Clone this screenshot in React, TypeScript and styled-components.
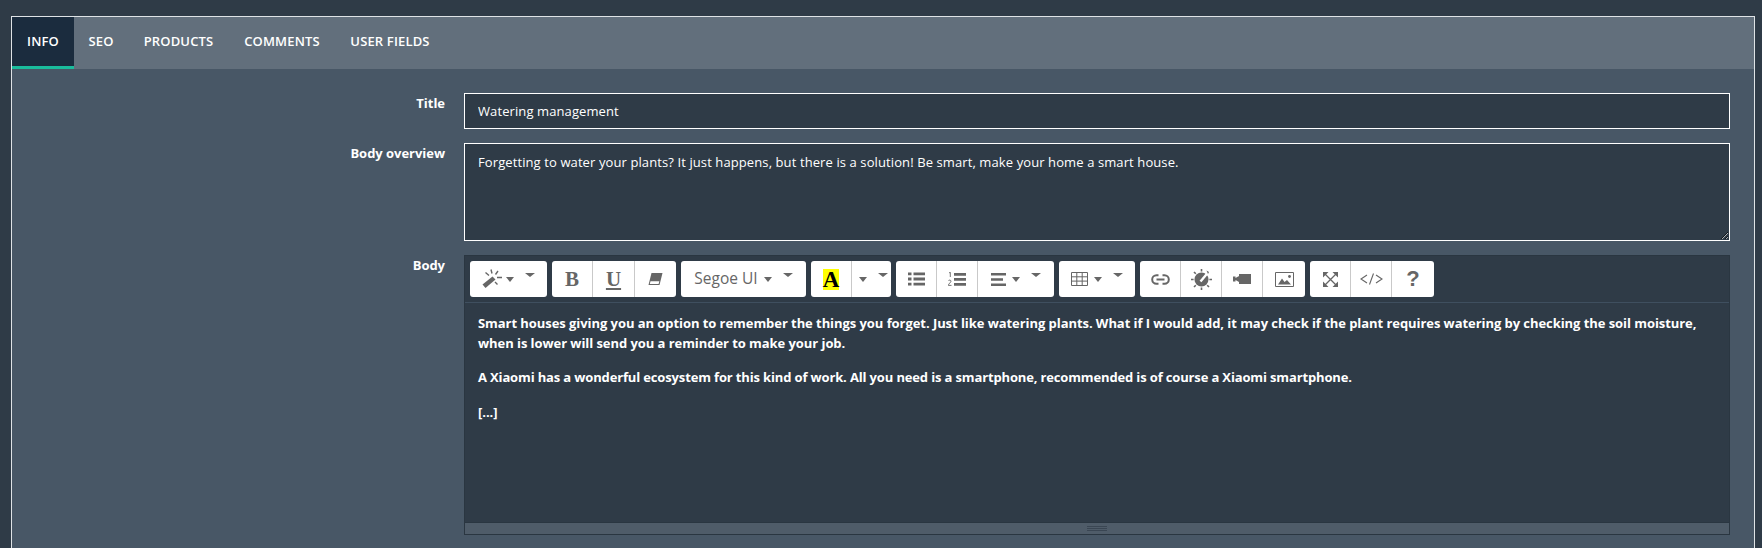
import React from "react";
import styled, { createGlobalStyle } from "styled-components";

const Global = createGlobalStyle`
  html, body { margin: 0; padding: 0; height: 100%; overflow: hidden; background: #2f3b47; }
  body { font-family: "Open Sans", "Noto Sans", "Liberation Sans", sans-serif; font-size: 13px; color: #fff; }
`;

const Page = styled.div`
  height: 548px;
  padding: 16px 7px 0 11px;
  box-sizing: border-box;
  overflow: hidden;
  background: #2f3b47;
`;
const Panel = styled.section`
  border: 1px solid #dfe3e6;
  border-bottom: 0;
  background: #485766;
  height: 600px;
`;
const Tabs = styled.nav`
  display: flex;
  height: 52px;
  background: #626f7c;
`;
const Tab = styled.a<{ $active?: boolean; $w: number }>`
  width: ${p => p.$w}px;
  box-sizing: border-box;
  display: flex;
  align-items: center;
  justify-content: center;
  padding-bottom: 2px;
  font-size: 13px;
  font-weight: 600;
  letter-spacing: 0.15px;
  color: #fff;
  background: ${p => (p.$active ? "#1b2c3e" : "transparent")};
  border-bottom: 3px solid ${p => (p.$active ? "#1abc9c" : "transparent")};
`;
const Form = styled.div`
  padding: 24px 24px 0 0;
  display: flex;
  flex-direction: column;
  gap: 14px;
`;
const Row = styled.div`
  display: grid;
  grid-template-columns: 433px 1fr;
  column-gap: 19px;
`;
const Label = styled.label`
  text-align: right;
  font-weight: 700;
  font-size: 13px;
  letter-spacing: -0.03px;
  line-height: 18px;
  padding-top: 1px;
`;
const TextInput = styled.input`
  box-sizing: border-box;
  display: block;
  width: 100%;
  height: 36px;
  padding: 0 13px;
  border: 1px solid #fff;
  border-radius: 0;
  background: #2f3b47;
  color: #fff;
  font: 400 13px "Open Sans", sans-serif;
  letter-spacing: 0.1px;
  outline: none;
`;
const TextArea = styled.textarea`
  box-sizing: border-box;
  display: block;
  width: 100%;
  height: 98px;
  padding: 9px 13px;
  border: 1px solid #fff;
  border-radius: 0;
  background: #2f3b47;
  color: #fff;
  font: 400 13px/19px "Open Sans", sans-serif;
  letter-spacing: 0.1px;
  outline: none;
  color-scheme: dark;
`;
const Editor = styled.div`
  border: 1px solid #2a3641;
  background: #2f3b47;
`;
const Toolbar = styled.div`
  display: flex;
  gap: 5px;
  padding: 5px 0 5px 5px;
  border-bottom: 1px solid #3f4f5f;
`;
const Group = styled.div`
  display: flex;
  height: 36px;
  background: #fff;
  border-radius: 3px;
  color: #666;
`;
const Btn = styled.div<{ $w: number; $gap?: number; $pl?: number }>`
  width: ${p => p.$w}px;
  box-sizing: border-box;
  display: flex;
  align-items: center;
  justify-content: center;
  gap: ${p => p.$gap ?? 6}px;
  padding-left: ${p => p.$pl ?? 0}px;
  &:not(:last-child) { border-right: 1px solid #c9c9c9; }
`;
const Serif = styled.span<{ $u?: boolean }>`
  font: 700 21px "Liberation Serif", serif;
  color: #666;
  text-decoration: ${p => (p.$u ? "underline" : "none")};
`;
const FontName = styled.span`
  font-size: 15.5px;
  color: #666;
  padding-bottom: 2px;
`;
const Highlight = styled.span`
  display: flex;
  align-items: center;
  justify-content: center;
  width: 16px;
  height: 21px;
  background: #ff0;
  color: #000;
  font: 700 23px/21px "Liberation Serif", serif;
`;
const Help = styled.span`
  font: 700 22px "Liberation Sans", sans-serif;
  color: #666;
`;
const Carets = styled.span`
  display: flex;
  align-items: flex-start;
  gap: 11px;
`;
const Caret = styled.i<{ $big?: boolean }>`
  width: 0;
  height: 0;
  display: block;
  border-left: ${p => (p.$big ? 5 : 4)}px solid transparent;
  border-right: ${p => (p.$big ? 5 : 4)}px solid transparent;
  border-top: ${p => (p.$big ? 4.5 : 5)}px solid #666;
  margin-top: ${p => (p.$big ? "-4px" : "0")};
`;
const Editable = styled.div`
  box-sizing: border-box;
  height: 219px;
  padding: 11px 13px 0;
  font-weight: 700;
  font-size: 13px;
  line-height: 19.5px;
  letter-spacing: -0.06px;
  color: #fff;
`;
const Para = styled.p<{ $tight?: boolean }>`
  margin: 0 0 15px;
  letter-spacing: ${p => (p.$tight ? "-0.145px" : "inherit")};
`;
const Status = styled.div`
  height: 11px;
  background: #4f5c69;
  border-top: 1px solid #2a3641;
  display: flex;
  align-items: center;
  justify-content: center;
`;

const Svg = ({ w, h, children }: { w: number; h: number; children: React.ReactNode }) => (
  <svg width={w} height={h} viewBox={`0 0 ${w} ${h}`} fill="#666" stroke="none">{children}</svg>
);

const DoubleCaret = () => (
  <Carets><Caret /><Caret $big /></Carets>
);

const Wand = () => (
  <Svg w={21} h={20}>
    <path d="M0.5 15.5 L10.5 7.5 L13.5 10.5 L3.5 19 Z" />
    <path d="M9 .5l1 4M3.5 3.5l3.5 3M16 2l-2.5 3.5M15 8.5h5M13 13l2.5 2.5" stroke="#666" strokeWidth="1.4" fill="none" />
  </Svg>
);
const Eraser = () => (
  <Svg w={15} h={14}>
    <path d="M3.5 1 H14.5 L11.5 13 H0.5 Z" />
    <path d="M2.5 9.2 H11.3 L10.6 12 H1.8 Z" fill="#fff" />
  </Svg>
);
const ListUl = () => (
  <Svg w={17} h={14}>
    <path d="M0 .5h3.5v2.8H0zM0 5.6h3.5v2.8H0zM0 10.7h3.5v2.8H0zM5.5 .5H17v2.8H5.5zM5.5 5.6H17v2.8H5.5zM5.5 10.7H17v2.8H5.5z" />
  </Svg>
);
const ListOl = () => (
  <Svg w={18} h={15}>
    <path d="M6 1h12v2.8H6zM6 6h12v2.8H6zM6 11h12v2.8H6z" />
    <path d="M1 1l1.3-.8v4.8M.4 8.8c.3-1 2.6-1 2.6.4 0 1.2-2.5 2.4-2.7 4.2h3.2" stroke="#666" strokeWidth=".9" fill="none" />
  </Svg>
);
const Align = () => (
  <Svg w={15} h={13}>
    <path d="M0 0h15v2.4H0zM0 5.3h12v2.4H0zM0 10.6h15V13H0z" />
  </Svg>
);
const TableIcon = () => (
  <Svg w={17} h={14}>
    <path d="M.5.5h16v13H.5zM.5 4.8h16M.5 9.1h16M5.8.5v13M11.2.5v13" stroke="#666" fill="none" />
  </Svg>
);
const LinkIcon = () => (
  <Svg w={19} h={11}>
    <path d="M7.5 1.2H5.5a4.3 4.3 0 0 0 0 8.6h2M11.5 1.2h2a4.3 4.3 0 0 1 0 8.6h-2M5.5 5.5h8" stroke="#666" strokeWidth="2" fill="none" />
  </Svg>
);
const Dial = () => (
  <Svg w={21} h={21}>
    <circle cx="10.5" cy="10.5" r="7" />
    <path d="M10.5 0v2.6M10.5 18.4V21M0 10.5h2.6M18.4 10.5H21M3 3l1.8 1.8M18 18l-1.8-1.8M3 18l1.8-1.8" stroke="#666" strokeWidth="1.6" fill="none" />
    <path d="M9.5 12.5 L17 3.5" stroke="#fff" strokeWidth="2.4" fill="none" />
    <path d="M15.5 1.5l2.5 1.5-1 2z" />
  </Svg>
);
const Video = () => (
  <Svg w={18} h={10}>
    <path d="M6 0h12v10H6zM0 2.5h2.5v5H0zM2.5 4L6 2v6L2.5 6z" />
  </Svg>
);
const Picture = () => (
  <Svg w={19} h={15}>
    <path d="M.5.5h18v14H.5z" stroke="#666" fill="none" />
    <path d="M3 12.5l4-6 2.5 3.5 2.5-2 4 4.5z" />
    <circle cx="14.5" cy="4.5" r="1.4" />
  </Svg>
);
const Expand = () => (
  <Svg w={15} h={15}>
    <path d="M2 2l11 11M13 2L2 13" stroke="#666" strokeWidth="1.3" fill="none" />
    <path d="M0 0h5.5L0 5.5zM15 0v5.5L9.5 0zM0 15V9.5L5.5 15zM15 15H9.5l5.5-5.5z" />
  </Svg>
);
const CodeIcon = () => (
  <Svg w={23} h={12}>
    <path d="M7 2L1 6l6 4M16 2l6 4-6 4M13.5 .5L9.5 11.5" stroke="#666" strokeWidth="1.1" fill="none" />
  </Svg>
);

export default function App() {
  return (
    <Page>
      <Global />
      <Panel>
        <Tabs>
          <Tab $active $w={62}>INFO</Tab>
          <Tab $w={54}>SEO</Tab>
          <Tab $w={101}>PRODUCTS</Tab>
          <Tab $w={106}>COMMENTS</Tab>
          <Tab $w={110}>USER FIELDS</Tab>
        </Tabs>
        <Form>
          <Row>
            <Label>Title</Label>
            <TextInput readOnly value="Watering management" />
          </Row>
          <Row>
            <Label>Body overview</Label>
            <TextArea readOnly value="Forgetting to water your plants? It just happens, but there is a solution! Be smart, make your home a smart house." />
          </Row>
          <Row>
            <Label>Body</Label>
            <Editor>
              <Toolbar>
                <Group>
                  <Btn $w={77} $gap={3}><Wand /><DoubleCaret /></Btn>
                </Group>
                <Group>
                  <Btn $w={41}><Serif>B</Serif></Btn>
                  <Btn $w={42}><Serif $u>U</Serif></Btn>
                  <Btn $w={41}><Eraser /></Btn>
                </Group>
                <Group>
                  <Btn $w={125}><FontName>Segoe UI</FontName><DoubleCaret /></Btn>
                </Group>
                <Group>
                  <Btn $w={41}><Highlight>A</Highlight></Btn>
                  <Btn $w={39} $pl={3}><DoubleCaret /></Btn>
                </Group>
                <Group>
                  <Btn $w={41}><ListUl /></Btn>
                  <Btn $w={41}><ListOl /></Btn>
                  <Btn $w={76}><Align /><DoubleCaret /></Btn>
                </Group>
                <Group>
                  <Btn $w={76}><TableIcon /><DoubleCaret /></Btn>
                </Group>
                <Group>
                  <Btn $w={41}><LinkIcon /></Btn>
                  <Btn $w={41}><Dial /></Btn>
                  <Btn $w={41}><Video /></Btn>
                  <Btn $w={42}><Picture /></Btn>
                </Group>
                <Group>
                  <Btn $w={41}><Expand /></Btn>
                  <Btn $w={41}><CodeIcon /></Btn>
                  <Btn $w={42}><Help>?</Help></Btn>
                </Group>
              </Toolbar>
              <Editable>
                <Para>Smart houses giving you an option to remember the things you forget. Just like watering plants. What if I would add, it may check if the plant requires watering by checking the soil moisture, when is lower will send you a reminder to make your job.</Para>
                <Para $tight>A Xiaomi has a wonderful ecosystem for this kind of work. All you need is a smartphone, recommended is of course a Xiaomi smartphone.</Para>
                <Para>[...]</Para>
              </Editable>
              <Status>
                <svg width="20" height="5" viewBox="0 0 20 5"><path d="M0 .5h20M0 2.5h20M0 4.5h20" stroke="#3a4653" /></svg>
              </Status>
            </Editor>
          </Row>
        </Form>
      </Panel>
    </Page>
  );
}
